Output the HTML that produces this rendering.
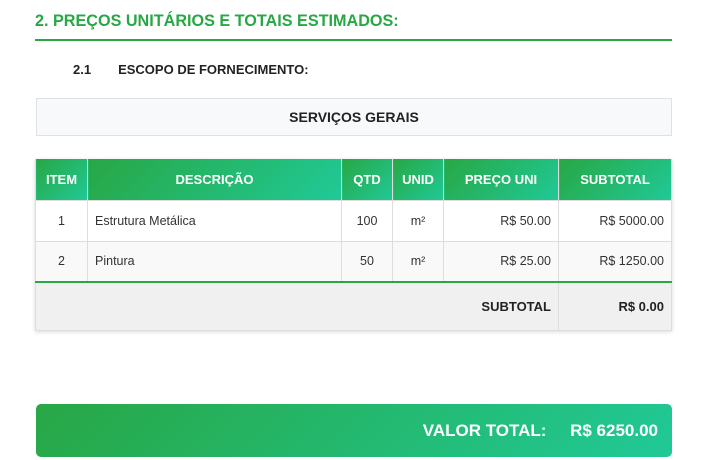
<!DOCTYPE html>
<html><head><meta charset="utf-8"><style>
*{margin:0;padding:0;box-sizing:border-box}
body{width:724px;height:460px;background:#fff;font-family:"Liberation Sans",sans-serif;position:relative;overflow:hidden;color:#333}
.abs{position:absolute}
h2{position:absolute;left:35px;top:12px;font-size:16.2px;font-weight:bold;color:#28a745}
.line{left:35px;top:39px;width:637px;height:2px;background:#28a745}
.sub{left:73px;top:62px;font-size:13px;font-weight:bold;color:#222}
.svc{left:36px;top:98px;width:636px;height:38px;background:#f8f9fa;border:1px solid #dee2e6;text-align:center;line-height:36px;font-size:14px;font-weight:bold;color:#222}
table{position:absolute;left:35px;top:159px;width:637px;border-collapse:collapse;font-size:12.5px;box-shadow:0 1px 4px rgba(0,0,0,.15)}
th{background:linear-gradient(135deg,#28a745,#20c997);color:#fff;height:41px;font-size:13px;font-weight:bold;border:1px solid #ddd;border-top:none}
td{height:41px;border:1px solid #ddd;padding:0 7px}
tr.r2 td{background:#f9f9f9}
tr.tot td{background:#f0f0f0;height:48px;font-weight:bold;border-top:2px solid #28a745;font-size:13px;color:#222}
.c{text-align:center}.r{text-align:right}
.total{left:36px;top:404px;width:636px;height:53px;border-radius:5px;background:linear-gradient(135deg,#28a745,#20c997);color:#fff;font-weight:bold;font-size:17px;text-align:right;line-height:53px;padding-right:14px}
</style></head><body>
<h2>2. PREÇOS UNITÁRIOS E TOTAIS ESTIMADOS:</h2>
<div class="abs line"></div>
<div class="abs sub">2.1<span style="display:inline-block;width:27px"></span>ESCOPO DE FORNECIMENTO:</div>
<div class="abs svc">SERVIÇOS GERAIS</div>
<table>
<tr><th style="width:52px">ITEM</th><th style="width:254px">DESCRIÇÃO</th><th style="width:51px">QTD</th><th style="width:51px">UNID</th><th style="width:115px">PREÇO UNI</th><th>SUBTOTAL</th></tr>
<tr><td class="c">1</td><td>Estrutura Metálica</td><td class="c">100</td><td class="c">m²</td><td class="r">R$ 50.00</td><td class="r">R$ 5000.00</td></tr>
<tr class="r2"><td class="c">2</td><td>Pintura</td><td class="c">50</td><td class="c">m²</td><td class="r">R$ 25.00</td><td class="r">R$ 1250.00</td></tr>
<tr class="tot"><td colspan="5" class="r" style="border-left:1px solid #ddd">SUBTOTAL</td><td class="r">R$ 0.00</td></tr>
</table>
<div class="abs total">VALOR TOTAL:&nbsp;&nbsp;&nbsp;&nbsp;&nbsp;R$ 6250.00</div>
</body></html>
